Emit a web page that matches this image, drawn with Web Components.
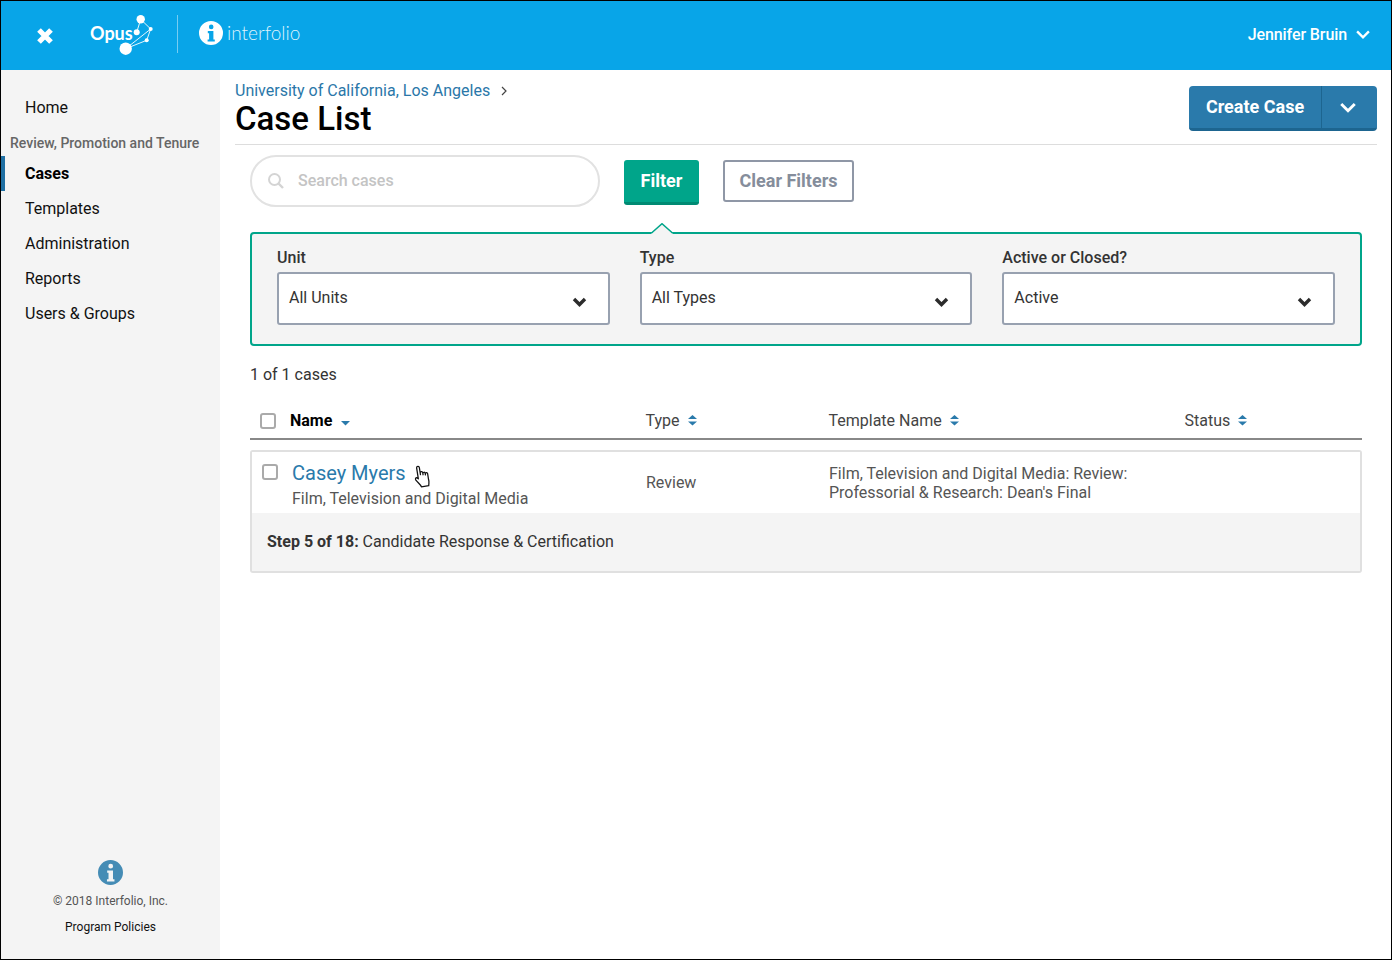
<!doctype html>
<html>
<head>
<meta charset="utf-8">
<title>Case List</title>
<style>
  html, body { margin: 0; padding: 0; background: #fff; }
  body { font-family: Roboto, "Liberation Sans", sans-serif; color: #333; }
</style>
</head>
<body>
<app-shell>
  <top-bar slot="top" user="Jennifer Bruin"></top-bar>
  <side-nav slot="side"></side-nav>
  <page-head crumb="University of California, Los Angeles" title="Case List"></page-head>
  <filter-bar></filter-bar>
  <filter-panel>
    <select-box label="Unit" value="All Units"></select-box>
    <select-box label="Type" value="All Types"></select-box>
    <select-box label="Active or Closed?" value="Active"></select-box>
  </filter-panel>
  <case-table count="1 of 1 cases">
    <case-card name="Casey Myers" unit="Film, Television and Digital Media" type="Review"
      template="Film, Television and Digital Media: Review: Professorial &amp; Research: Dean's Final"
      step="Step 5 of 18:" stepname="Candidate Response &amp; Certification"></case-card>
  </case-table>
</app-shell>

<script>
(function() {
  // shared little icons
  const chevron = (w, color, sw) => `<svg width="${w}" height="${Math.round(w * 0.7)}" viewBox="0 0 20 14" style="display:block"><path d="M2.5 3 L10 10.5 L17.5 3" fill="none" stroke="${color}" stroke-width="${sw}"/></svg>`;
  const infoPath = 'M12 0a12 12 0 1 0 0 24a12 12 0 1 0 0-24z M12.2 3.6a2.3 2.3 0 1 1 0 4.6a2.3 2.3 0 1 1 0-4.6z M8.8 10h5.6v8.4h1.4v2.2H8.6v-2.2h1.5v-6.2H8.8z';

  function define(name, render) {
    customElements.define(name, class extends HTMLElement {
      connectedCallback() {
        if (this.shadowRoot) return;
        this.attachShadow({mode: 'open'}).innerHTML = render(this);
      }
    });
  }

  define('app-shell', () => `<style>
    :host { display: block; box-sizing: border-box; width: 1392px; height: 960px; border: 1px solid #000; overflow: hidden; }
    .body { display: flex; height: 889px; }
    main { flex: 1; min-width: 0; padding: 0 14px 0 15px; }
  </style>
  <slot name="top"></slot>
  <div class="body"><slot name="side"></slot><main><slot></slot></main></div>`);

  define('top-bar', el => `<style>
    :host { display: flex; align-items: center; height: 69px; background: #08a5e8; color: #fff; }
    .close { margin: 0 0 0 35px; width: 18px; height: 18px; }
    .close svg, .opus svg, .brand svg { display: block; }
    .opus { margin-left: 35px; display: flex; position: relative; width: 66px; height: 45px; }
    .opus b { font: 700 18px/40px Lato, sans-serif; margin-left: 1px; }
    .opus svg { position: absolute; left: 26px; top: 0; }
    .sep { width: 1px; height: 38px; background: rgba(255,255,255,.45); margin: -3px 21px 0 22px; }
    .brand { display: flex; align-items: center; gap: 4px; margin-top: -5px; }
    .brand span { font: 300 19px/24px Lato, sans-serif; color: #dff3fc; }
    .user { margin-left: auto; margin-right: 20px; margin-top: -2px; display: flex; align-items: center; gap: 8px; font-weight: 500; font-size: 16px; letter-spacing: -.1px; }
  </style>
  <div class="close"><svg width="18" height="18" viewBox="0 0 18 18"><path d="M3 3 L15 15 M15 3 L3 15" stroke="#fff" stroke-width="5.2"/></svg></div>
  <div class="opus"><b>Opus</b>
    <svg width="42" height="46" viewBox="0 0 42 46" fill="#fff" stroke="#fff" stroke-width=".9">
      <path fill="none" d="M25.7 6.3 L35.7 16 L10.7 35.7 L31.7 27.3 L35.7 16 M25.7 6.3 L21.7 19.3"/>
      <circle cx="25.7" cy="6.3" r="4.2" stroke="none"/><circle cx="35.7" cy="16" r="2" stroke="none"/><circle cx="21.7" cy="19.3" r="3" stroke="none"/><circle cx="31.7" cy="27.3" r="2" stroke="none"/><circle cx="10.7" cy="35.7" r="6.2" stroke="none"/>
    </svg>
  </div>
  <div class="sep"></div>
  <div class="brand"><svg width="24" height="24" viewBox="0 0 24 24"><path fill="#fff" fill-rule="evenodd" d="${infoPath}"/></svg><span>interfolio</span></div>
  <div class="user">${el.getAttribute('user')} ${chevron(16, '#fff', 3)}</div>`);

  define('nav-item', el => `<style>
    :host { display: block; height: 35px; line-height: 35px; padding-left: 24px; font-size: 16px; color: #111; position: relative; }
    :host([active]) { font-weight: 700; color: #000; }
    :host([active])::before { content: ""; position: absolute; left: 0; top: 0; width: 4px; height: 35px; background: #1f6fa3; }
  </style><slot></slot>`);

  define('side-nav', () => `<style>
    :host { display: flex; flex-direction: column; width: 219px; flex: none; background: #f4f4f4; padding-top: 20px; box-sizing: border-box; }
    h4 { margin: 5px 0 0; padding-left: 9px; height: 26px; font: 500 14px/26px Roboto, sans-serif; color: #666; white-space: nowrap; }
    .foot { margin-top: auto; padding-bottom: 24px; text-align: center; font-size: 12px; }
    .foot svg { display: block; margin: 0 auto 9px; }
    .copy { color: #555; line-height: 15px; }
    .pol { color: #111; margin-top: 11px; line-height: 15px; }
  </style>
  <nav-item>Home</nav-item>
  <h4>Review, Promotion and Tenure</h4>
  <nav-item active>Cases</nav-item>
  <nav-item>Templates</nav-item>
  <nav-item>Administration</nav-item>
  <nav-item>Reports</nav-item>
  <nav-item>Users &amp; Groups</nav-item>
  <div class="foot">
    <svg width="25" height="25" viewBox="0 0 24 24"><path fill="#458cb5" fill-rule="evenodd" d="${infoPath}"/></svg>
    <div class="copy">© 2018 Interfolio, Inc.</div>
    <div class="pol">Program Policies</div>
  </div>`);

  define('page-head', el => `<style>
    :host { display: flex; justify-content: space-between; align-items: flex-start; height: 75px; box-sizing: border-box; border-bottom: 1px solid #ddd; }
    .crumb { margin-top: 11px; font-size: 16px; line-height: 20px; color: #2a77a9; display: flex; align-items: center; gap: 10px; }
    .crumb svg { display: block; }
    h1 { margin: 0; font: 500 33px/36px Roboto, sans-serif; color: #000; }
    .split { margin-top: 16px; width: 188px; height: 45px; box-sizing: border-box; display: flex; background: #2a7aab; border-bottom: 3px solid #1d6590; border-radius: 4px; color: #fff; }
    .split span { width: 133px; box-sizing: border-box; text-align: center; font: 700 18px/42px Roboto, sans-serif; border-right: 1px solid #1d6590; }
    .split i { flex: 1; display: flex; align-items: center; justify-content: center; padding-right: 3px; }
  </style>
  <div>
    <div class="crumb">${el.getAttribute('crumb')}<svg width="8" height="10" viewBox="0 0 8 10"><path d="M2 1 L6 5 L2 9" fill="none" stroke="#444" stroke-width="1.2"/></svg></div>
    <h1>${el.getAttribute('title')}</h1>
  </div>
  <div class="split"><span>Create Case</span><i>${chevron(18, '#fff', 3.2)}</i></div>`);

  define('filter-bar', () => `<style>
    :host { display: flex; align-items: flex-start; padding: 10px 0 0 15px; height: 87px; box-sizing: border-box; }
    .search { width: 350px; height: 52px; box-sizing: border-box; border: 2px solid #e2e2e2; border-radius: 26px; display: flex; align-items: center; padding: 0 0 2px 15px; gap: 13px; color: #c4c4c4; font-size: 16px; font-weight: 500; }
    .search svg { display: block; margin-top: 2px; }
    button { font-family: inherit; font-size: 18px; font-weight: 700; box-sizing: border-box; margin-top: 5px; }
    .go { margin-left: 24px; width: 75px; height: 45px; background: #00a58a; color: #fff; border: 0; border-bottom: 3px solid #008a73; border-radius: 3px; padding: 0 0 2px; }
    .clear { margin-left: 24px; width: 131px; height: 42px; background: #fff; color: #858d9b; border: 2px solid #8f97a6; border-radius: 3px; padding: 0 0 2px; }
  </style>
  <div class="search"><svg width="18" height="18" viewBox="0 0 18 18"><circle cx="7.5" cy="7.5" r="5.5" fill="none" stroke="#d4d4d4" stroke-width="2"/><path d="M11.5 11.5 L16 16" stroke="#d4d4d4" stroke-width="2.4"/></svg>Search cases</div>
  <button class="go">Filter</button>
  <button class="clear">Clear Filters</button>`);

  define('filter-panel', () => `<style>
    :host { display: block; position: relative; margin: 0 15px; height: 114px; box-sizing: border-box; background: #f4f4f4; border: 2px solid #00a58a; border-radius: 4px; }
    .grid { display: grid; grid-template-columns: repeat(3, 1fr); column-gap: 30px; padding: 14px 25px 0; }
    .tip { position: absolute; left: 399px; top: -11px; }
    .tip svg { display: block; }
  </style>
  <div class="tip"><svg width="22" height="12" viewBox="0 0 22 12"><path d="M0 11 L11 0.5 L22 11 L22 12 L0 12 Z" fill="#f4f4f4"/><path d="M0.5 10 L11 0.7 L21.5 10" fill="none" stroke="#00a58a" stroke-width="1.5"/></svg></div>
  <div class="grid"><slot></slot></div>`);

  define('select-box', el => `<style>
    :host { display: block; min-width: 0; }
    label { display: block; font: 500 16px/20px Roboto, sans-serif; color: #333; margin-bottom: 4px; }
    .box { height: 53px; box-sizing: border-box; background: #fff; border: 2px solid #98a1b0; border-radius: 3px; padding: 0 21px 0 10px; display: flex; justify-content: space-between; align-items: center; font-size: 16px; color: #333; }
    .box span { margin-top: -3px; }
    .box svg { display: block; margin-top: 6px; }
  </style>
  <label>${el.getAttribute('label')}</label>
  <div class="box"><span>${el.getAttribute('value')}</span><svg width="15" height="10" viewBox="0 0 15 10"><path d="M2 2 L7.5 7.5 L13 2" fill="none" stroke="#2c2c2c" stroke-width="3.4"/></svg></div>`);

  define('sort-head', el => {
    const down = el.hasAttribute('down');
    return `<style>
      :host { display: flex; align-items: center; gap: 8px; font-size: 16px; color: #444; }
      :host([down]) { font-weight: 700; color: #000; gap: 9px; }
      svg { display: block; fill: #2a7aab; }
      :host([down]) svg { margin-top: 6px; }
    </style><slot></slot><svg width="9" height="${down ? 5 : 11}" viewBox="0 0 9 ${down ? 5 : 11}">${down ? '<path d="M0 0 H9 L4.5 4.5 Z"/>' : '<path d="M4.5 0 L9 4 H0 Z"/><path d="M0 6.5 H9 L4.5 10.5 Z"/>'}</svg>`;
  });

  define('case-table', el => `<style>
    :host { display: block; margin: 0 15px; }
    .count { font-size: 16px; line-height: 20px; margin-top: 19px; color: #333; }
    .head { display: grid; grid-template-columns: 395.5px 183px 356px 1fr; height: 36px; margin-top: 17px; border-bottom: 2px solid #888; align-items: center; }
    .first { display: flex; align-items: center; }
    .check { width: 16px; height: 16px; box-sizing: border-box; border: 2px solid #aaa; border-radius: 3px; background: #fff; margin: 2px 14px 0 10px; flex: none; }
    .list { margin-top: 10px; }
  </style>
  <div class="count">${el.getAttribute('count')}</div>
  <div class="head">
    <div class="first"><div class="check"></div><sort-head down>Name</sort-head></div>
    <sort-head>Type</sort-head>
    <sort-head>Template Name</sort-head>
    <sort-head>Status</sort-head>
  </div>
  <div class="list"><slot></slot></div>`);

  define('case-card', el => `<style>
    :host { display: block; box-sizing: border-box; height: 123px; border: 2px solid #e0e0e0; border-radius: 3px; }
    .top { display: grid; grid-template-columns: 394px 183px 1fr; height: 61px; background: #fff; }
    .main { position: relative; padding-left: 40px; }
    .check { position: absolute; left: 10px; top: 12px; width: 16px; height: 16px; box-sizing: border-box; border: 2px solid #aaa; border-radius: 3px; }
    .name { font-size: 20px; line-height: 24px; color: #2a7aab; margin-top: 9px; display: flex; }
    .cursor { margin: 3px 0 0 6px; display: block; }
    .unit { font-size: 16px; line-height: 20px; color: #555; margin-top: 1px; }
    .type, .tpl { font-size: 16px; color: #555; line-height: 19px; }
    .type { padding-top: 21px; }
    .tpl { padding-top: 12px; max-width: 320px; }
    .step { height: 58px; background: #f4f4f4; padding-left: 15px; font-size: 16px; line-height: 57px; color: #333; }
    .step b { font-weight: 700; }
  </style>
  <div class="top">
    <div class="main"><div class="check"></div>
      <div class="name">${el.getAttribute('name')}
        <svg class="cursor" width="19" height="24" viewBox="0 0 19 24"><g transform="rotate(-9 9 11) translate(1 1) scale(1.06)"><path d="M4.5 10.5 V2.2 a1.3 1.3 0 0 1 2.6 0 V9 V7.6 a1.2 1.2 0 0 1 2.4 0 V9.5 V8.4 a1.1 1.1 0 0 1 2.2 0 V10 V9.2 a1.1 1.1 0 0 1 2.2 0 V14.5 C14.4 17 13.6 18 13.2 20.5 H6.2 C5.6 18 3.8 16.6 2 13.4 C1.3 12 2.6 10.8 3.6 11.6 L4.5 12.6 Z" fill="#fff" stroke="#111" stroke-width="1.2" stroke-linejoin="round"/></g></svg>
      </div>
      <div class="unit">${el.getAttribute('unit')}</div>
    </div>
    <div class="type">${el.getAttribute('type')}</div>
    <div class="tpl">${el.getAttribute('template')}</div>
  </div>
  <div class="step"><b>${el.getAttribute('step')}</b> ${el.getAttribute('stepname')}</div>`);
}());
</script>
</body>
</html>
